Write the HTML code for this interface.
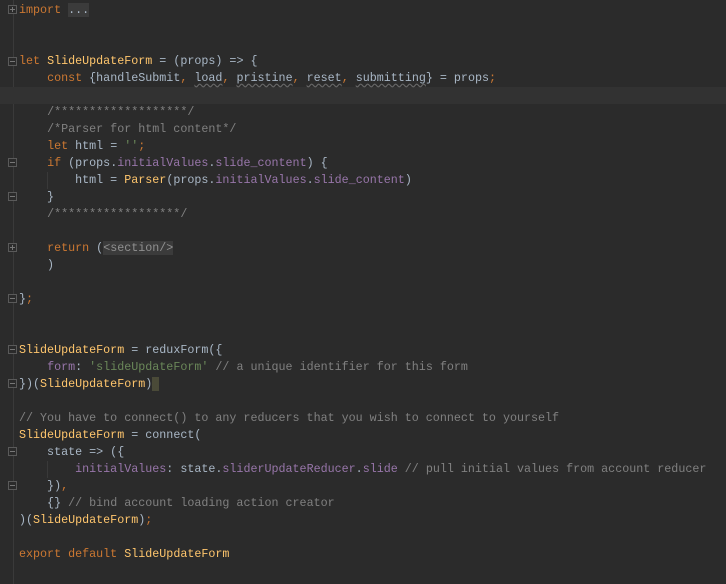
<!DOCTYPE html>
<html><head><style>
body{margin:0;background:#2b2b2b;width:726px;height:584px;overflow:hidden;position:relative}
.g{position:absolute;left:13px;top:0;width:1px;height:584px;background:#3a3a3a}
.cur{position:absolute;left:0;top:87px;width:726px;height:17px;background:#323232}
pre{position:absolute;left:19px;top:2px;margin:0;font-family:"Liberation Mono",monospace;font-size:11.7px;line-height:17px;color:#a9b7c6;white-space:pre}
.k{color:#cc7832}.f{color:#ffc66d}.c{color:#808080}.s{color:#6a8759}.p{color:#9876aa}
.fold{position:absolute;left:8px;width:9px;height:9px;border:1px solid #5a5a5a;box-sizing:border-box;background:#2b2b2b}
.fold:after{content:"";position:absolute;left:1px;top:3px;width:5px;height:1px;background:#777}
.plus:before{content:"";position:absolute;left:3px;top:1px;width:1px;height:5px;background:#777}
.w{text-decoration:underline wavy #666;text-underline-offset:2px}
.sel{background:#3b3b3b}
.caret{background:#4a4a38}
.ind{position:absolute;width:1px;background:#393939}
</style></head><body>
<div class="g"></div>
<div class="cur"></div>
<div class="fold plus" style="top:5px"></div>
<div class="fold" style="top:57px"></div>
<div class="fold" style="top:158px"></div>
<div class="fold" style="top:192px"></div>
<div class="fold plus" style="top:243px"></div>
<div class="fold" style="top:294px"></div>
<div class="fold" style="top:345px"></div>
<div class="fold" style="top:379px"></div>
<div class="fold" style="top:447px"></div>
<div class="fold" style="top:481px"></div>
<div class="ind" style="left:47px;top:172px;height:17px"></div>
<div class="ind" style="left:47px;top:461px;height:17px"></div>
<pre><span class="k">import</span> <span class="sel">...</span>


<span class="k">let</span> <span class="f">SlideUpdateForm</span> = (props) =&gt; {
    <span class="k">const</span> {handleSubmit<span class="k">,</span> <span class="w">load</span><span class="k">,</span> <span class="w">pristine</span><span class="k">,</span> <span class="w">reset</span><span class="k">,</span> <span class="w">submitting</span>} = props<span class="k">;</span>

    <span class="c">/*******************/</span>
    <span class="c">/*Parser for html content*/</span>
    <span class="k">let</span> html = <span class="s">''</span><span class="k">;</span>
    <span class="k">if</span> (props.<span class="p">initialValues</span>.<span class="p">slide_content</span>) {
        html = <span class="f">Parser</span>(props.<span class="p">initialValues</span>.<span class="p">slide_content</span>)
    }
    <span class="c">/******************/</span>

    <span class="k">return</span> (<span class="sel" style="color:#909090">&lt;section/&gt;</span>
    )

}<span class="k">;</span>


<span class="f">SlideUpdateForm</span> = reduxForm({
    <span class="p">form</span>: <span class="s">'slideUpdateForm'</span> <span class="c">// a unique identifier for this form</span>
})(<span class="f">SlideUpdateForm</span>)<span class="caret"> </span>

<span class="c">// You have to connect() to any reducers that you wish to connect to yourself</span>
<span class="f">SlideUpdateForm</span> = connect(
    state =&gt; ({
        <span class="p">initialValues</span>: state.<span class="p">sliderUpdateReducer</span>.<span class="p">slide</span> <span class="c">// pull initial values from account reducer</span>
    })<span class="k">,</span>
    {} <span class="c">// bind account loading action creator</span>
)(<span class="f">SlideUpdateForm</span>)<span class="k">;</span>

<span class="k">export default</span> <span class="f">SlideUpdateForm</span></pre>
</body></html>
